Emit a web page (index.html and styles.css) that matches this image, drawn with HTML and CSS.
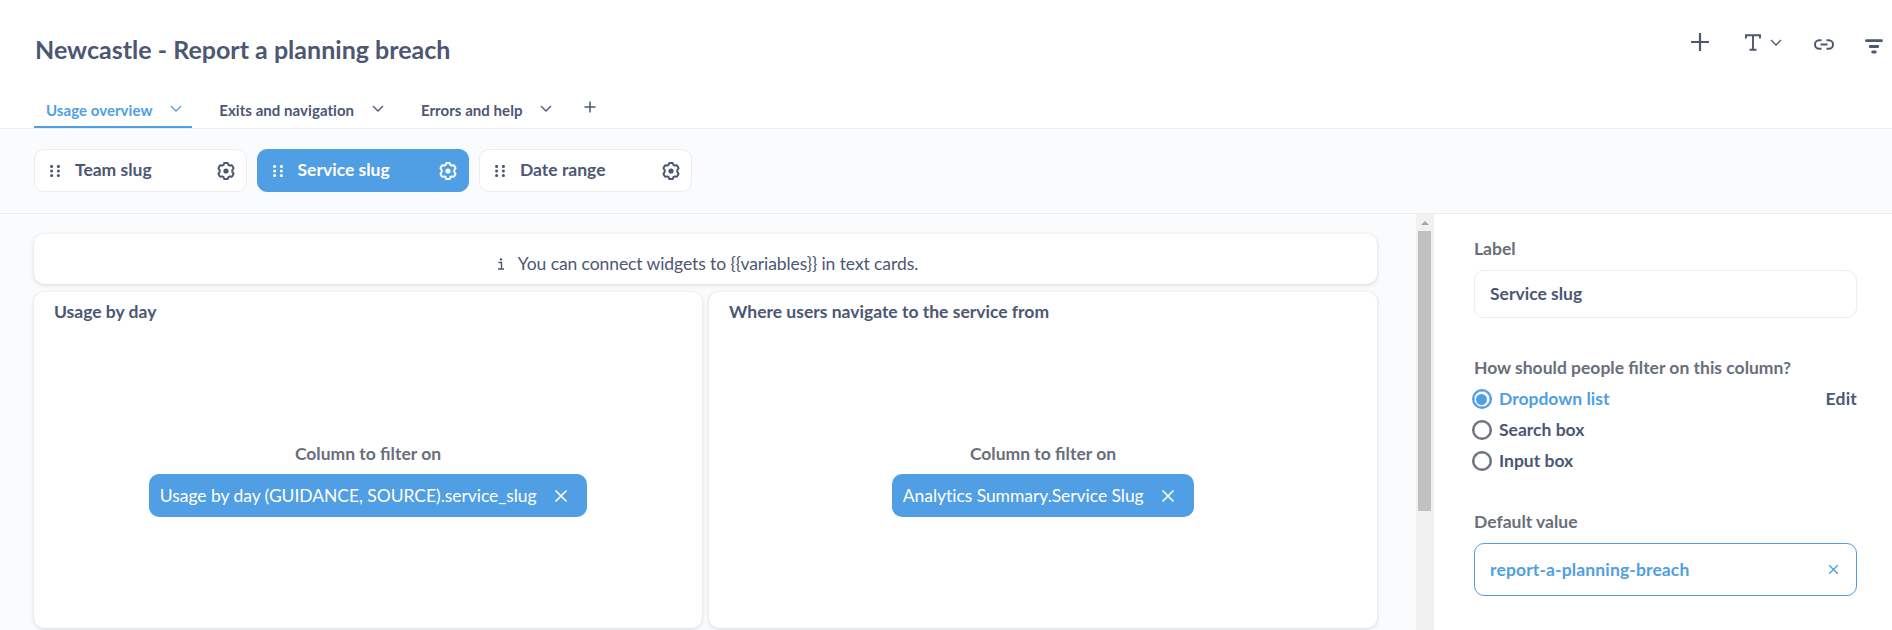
FILE: index.html
```
<!DOCTYPE html>
<html lang="en">
<head>
<meta charset="utf-8">
<title>Newcastle - Report a planning breach</title>
<link rel="stylesheet" href="styles.css">
</head>
<body>
<svg class="defs" width="0" height="0">
  <symbol id="chevron" viewBox="0 0 12 7"><path d="M1 1l5 5 5-5" fill="none" stroke="currentColor" stroke-width="1.3"/></symbol>
  <symbol id="grip" viewBox="0 0 10 12"><g fill="currentColor"><circle cx="1.6" cy="1.4" r="1.5"/><circle cx="8.4" cy="1.4" r="1.5"/><circle cx="1.6" cy="6" r="1.5"/><circle cx="8.4" cy="6" r="1.5"/><circle cx="1.6" cy="10.6" r="1.5"/><circle cx="8.4" cy="10.6" r="1.5"/></g></symbol>
  <symbol id="gear" viewBox="0 0 18 18"><path d="M7.600 1h2.800q.5 0 .6.500l.4 1.400 1.300.7 1.500-.4q.6-.1.900.3l1.300 2.300q.3.500-.1.900L15.300 8v2l1 1.300q.4.400.1.900l-1.300 2.300q-.3.400-.9.300l-1.500-.4-1.300.7-.4 1.400q-.1.500-.6.500H7.600q-.5 0-.6-.5l-.4-1.400-1.300-.7-1.500.4q-.6.100-.9-.3l-1.300-2.300q-.3-.5.100-.9L2.700 10V8l-1-1.300q-.4-.4-.1-.9l1.300-2.300q.3-.4.900-.3l1.500.4 1.300-.7L7 1.500q.1-.5.6-.5z" fill="none" stroke="currentColor" stroke-width="2" stroke-linejoin="round"/><circle cx="9" cy="9" r="2.600" fill="currentColor"/></symbol>
  <symbol id="cross" viewBox="0 0 14 14"><path d="M1.500 1.500l11 11M12.500 1.500l-11 11" fill="none" stroke="currentColor" stroke-width="1.700"/></symbol>
</svg>
<header class="header">
  <h1 class="title">Newcastle - Report a planning breach</h1>
  <div class="toolbar">
    <svg class="tool-plus" viewBox="0 0 18 18"><path d="M9 .8v16.400M.8 9h16.400" stroke="currentColor" stroke-width="2.200" stroke-linecap="round"/></svg>
    <svg class="tool-text" viewBox="0 0 16 17"><path d="M1 4.500V1.200h14v3.300M8 1.200v14.600M4.500 15.800h7" fill="none" stroke="currentColor" stroke-width="1.900"/></svg>
    <svg class="tool-chevron"><use href="#chevron"/></svg>
    <svg class="tool-link" viewBox="0 0 20 11"><path d="M7.500 1.200H5.300a4.300 4.300 0 0 0 0 8.600h2.200M12.500 1.200h2.200a4.300 4.300 0 0 1 0 8.600h-2.200M6.500 5.500h7" fill="none" stroke="currentColor" stroke-width="2"/></svg>
    <svg class="tool-filter" viewBox="0 0 18 15"><path d="M1.500 1.700h15M5.200 7.500h7.600M7.700 13h2.600" stroke="currentColor" stroke-width="2.800" stroke-linecap="round"/></svg>
  </div>
</header>
<nav class="tabs">
  <div class="tab tab-active"><span>Usage overview</span><svg class="tab-chevron"><use href="#chevron"/></svg></div>
  <div class="tab"><span>Exits and navigation</span><svg class="tab-chevron"><use href="#chevron"/></svg></div>
  <div class="tab"><span>Errors and help</span><svg class="tab-chevron"><use href="#chevron"/></svg></div>
  <svg class="tab-add" viewBox="0 0 12 12"><path d="M6 .5v11M.5 6h11" stroke="currentColor" stroke-width="1.500"/></svg>
</nav>
<section class="filters">
  <div class="chip"><svg class="grip"><use href="#grip"/></svg><span>Team slug</span><svg class="gear"><use href="#gear"/></svg></div>
  <div class="chip chip-active"><svg class="grip"><use href="#grip"/></svg><span>Service slug</span><svg class="gear"><use href="#gear"/></svg></div>
  <div class="chip"><svg class="grip"><use href="#grip"/></svg><span>Date range</span><svg class="gear"><use href="#gear"/></svg></div>
</section>
<main class="main">
  <div class="grid">
    <div class="card info"><svg class="info-icon" viewBox="0 0 6 12"><path d="M.5 4.500h3v6.300M0 11h6" fill="none" stroke="currentColor" stroke-width="1.400"/><circle cx="3" cy="1.400" r="1.200" fill="currentColor"/></svg><span>You can connect widgets to {{variables}} in text cards.</span></div>
    <div class="card panel">
      <h2 class="panel-title">Usage by day</h2>
      <p class="panel-label">Column to filter on</p>
      <div class="mapping"><span>Usage by day (GUIDANCE, SOURCE).service_slug</span><svg class="cross"><use href="#cross"/></svg></div>
    </div>
    <div class="card panel">
      <h2 class="panel-title">Where users navigate to the service from</h2>
      <p class="panel-label">Column to filter on</p>
      <div class="mapping"><span>Analytics Summary.Service Slug</span><svg class="cross"><use href="#cross"/></svg></div>
    </div>
  </div>
  <div class="scrollbar"><div class="scroll-arrow"></div><div class="scroll-thumb"></div></div>
  <aside class="sidebar">
    <div class="field-label">Label</div>
    <div class="input">Service slug</div>
    <div class="field-label label-filter">How should people filter on this column?</div>
    <div class="radio radio-on"><i class="dot"></i><span>Dropdown list</span><span class="edit">Edit</span></div>
    <div class="radio"><i class="dot"></i><span>Search box</span></div>
    <div class="radio"><i class="dot"></i><span>Input box</span></div>
    <div class="field-label label-default">Default value</div>
    <div class="input input-default"><span>report-a-planning-breach</span><svg class="clear"><use href="#cross"/></svg></div>
  </aside>
</main>
</body>
</html>
```
FILE: styles.css
```
* { box-sizing: border-box; }
body { margin: 0; width: 1892px; height: 630px; overflow: hidden; display: flex; flex-direction: column; background: #fff; color: #4c5773; font-family: Lato, sans-serif; font-size: 17.5px; line-height: 22px; }
svg { display: block; flex: none; }
.defs { position: absolute; }
.header { display: flex; justify-content: space-between; height: 84px; padding-left: 35px; padding-right: 9px; }
.title { margin: 34px 0 0; font-size: 25px; line-height: 30px; font-weight: 700; letter-spacing: .015px; }
.toolbar { display: flex; align-items: flex-start; }
.tool-plus { width: 18px; height: 18px; margin: 33px 36.5px 0 0; }
.tool-text { width: 16px; height: 17px; margin: 34px 9px 0 0; }
.tool-chevron { width: 12px; height: 7px; margin: 39px 31.5px 0 0; }
.tool-link { width: 20px; height: 11px; margin: 39px 31.5px 0 0; }
.tool-filter { width: 18px; height: 15px; margin-top: 39px; }
.tabs { display: flex; height: 45px; padding-left: 34px; border-bottom: 1px solid #eeecec; }
.tab { display: flex; height: 44px; margin-right: 15.3px; padding: 0 10px 0 12px; font-size: 15px; line-height: 20px; font-weight: 700; letter-spacing: .05px; }
.tab span { margin-top: 16px; }
.tab-chevron { width: 12px; height: 7px; margin: 21px 0 0 17.5px; }
.tab-active { color: #509ee3; border-bottom: 2px solid #509ee3; }
.tab-add { width: 12px; height: 12px; margin: 17px 0 0 7px; }
.filters { display: flex; gap: 10px; height: 85px; padding: 20px 34px 0; background: #f9fbfc; border-bottom: 1px solid #eeecec; }
.chip { display: flex; align-items: center; width: 212.5px; height: 43px; padding: 0 11px 0 15px; background: #fff; border: 1px solid #eeecec; border-radius: 10px; font-weight: 700; }
.chip-active { background: #509ee3; border-color: #509ee3; color: #fff; }
.grip { width: 10px; height: 12px; }
.chip span { flex: 1; margin-left: 15px; padding-bottom: 1px; }
.gear { width: 18px; height: 18px; }
.main { display: flex; flex: 1; min-height: 0; }
.grid { width: 1416px; padding: 20px 39px 0 34px; display: grid; grid-template-columns: 1fr 1fr; grid-template-rows: 50px 336.5px; gap: 7.5px 7px; background: #f9fbfc; }
.card { background: #fff; border-radius: 10px; box-shadow: 0 1px 4px rgba(0,0,0,.15); }
.info { grid-column: 1 / 3; display: flex; justify-content: center; align-items: center; padding: 9px 0 0 5px; letter-spacing: -.085px; }
.info-icon { width: 6px; height: 12px; margin-right: 14px; }
.panel { display: flex; flex-direction: column; align-items: center; }
.panel-title { align-self: flex-start; margin: 9.4px 0 0 20px; font-size: 17.5px; line-height: 22px; font-weight: 700; }
.panel-label { margin: 120px 0 0; color: #696e7b; font-weight: 700; }
.mapping { display: flex; align-items: center; height: 43px; margin-top: 9.6px; padding: 0 19px 0 11px; border-radius: 10px; background: #509ee3; color: #fff; letter-spacing: -.05px; }
.cross { width: 14px; height: 14px; margin-left: 17.5px; }
.scrollbar { width: 17px; background: #f1f1f1; padding: 7px 2px 0; }
.scroll-arrow { width: 0; margin: 0 auto; border: 4px solid transparent; border-top: 0; border-bottom: 4px solid #a3a3a3; }
.scroll-thumb { height: 280px; margin-top: 6px; background: #c1c1c1; }
.sidebar { flex: 1; padding: 24px 35px 0 40px; border-left: 1px solid #eeecec; font-weight: 700; }
.field-label { color: #696e7b; }
.input { display: flex; align-items: center; height: 48px; margin-top: 10px; padding: 0 22px 0 15px; border: 1px solid #eeecec; border-radius: 10px; }
.label-filter { margin-top: 39px; }
.radio { display: flex; align-items: center; height: 31px; margin-left: -2.5px; }
.radio-on { margin-top: 4.5px; color: #509ee3; }
.dot { display: grid; place-items: center; width: 20px; height: 20px; margin-right: 7.5px; border: 2.5px solid #696e7b; border-radius: 50%; box-shadow: inset 0 0 0 .5px #696e7b; }
.radio-on .dot { border-color: #509ee3; box-shadow: inset 0 0 0 .5px #509ee3; }
.radio-on .dot::after { content: ""; width: 11px; height: 11px; border-radius: 50%; background: #509ee3; }
.edit { margin-left: auto; color: #4c5773; letter-spacing: .2px; }
.label-default { margin-top: 34.5px; }
.input-default { height: 53px; padding-right: 17px; border-color: #509ee3; color: #509ee3; justify-content: space-between; letter-spacing: .13px; }
.clear { width: 11px; height: 11px; }
```
